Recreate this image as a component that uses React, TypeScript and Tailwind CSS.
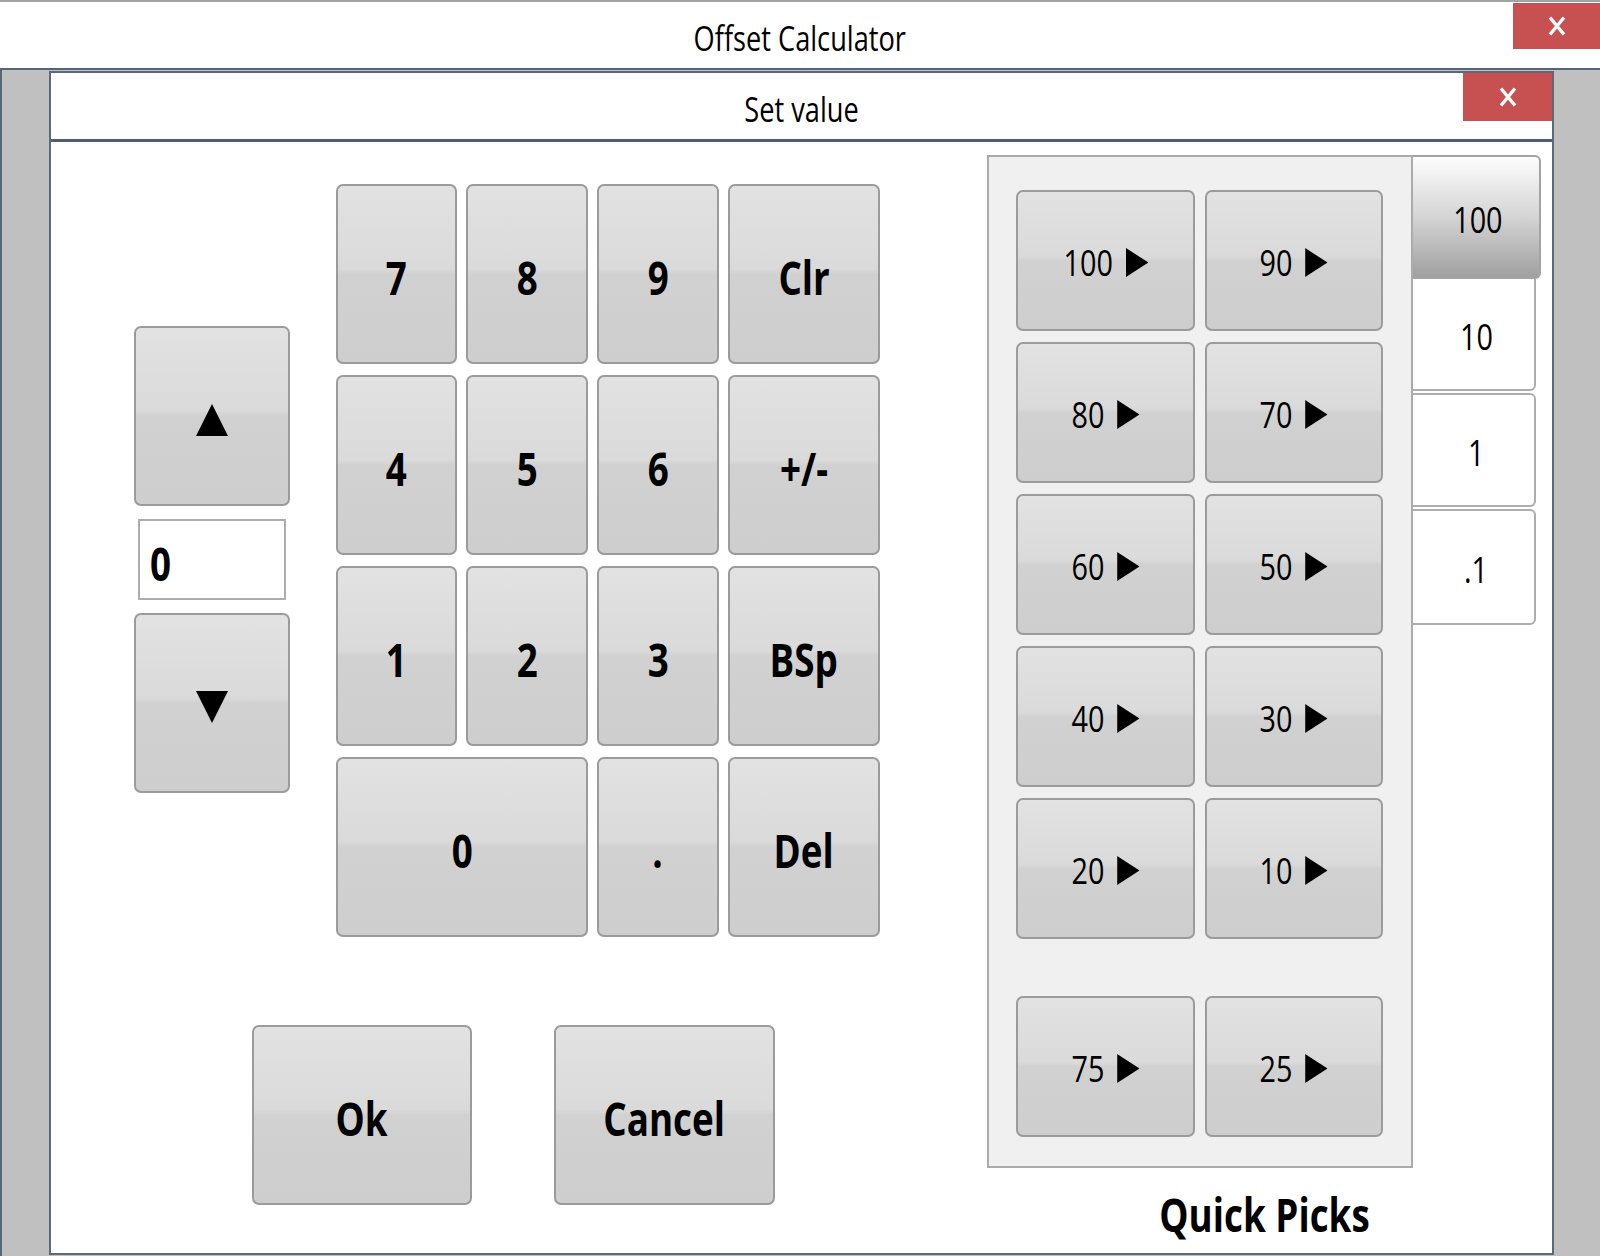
import type { ReactNode } from "react";

const gloss =
	"rounded-[7px] border-2 border-[#9b9b9b] bg-[linear-gradient(to_bottom,#e2e2e2_0%,#dadada_47%,#d1d1d1_50%,#cecece_100%)]";

function Squeeze({ children, className = "" }: { children: ReactNode; className?: string }) {
	return <span className={`inline-flex items-center scale-x-[0.8] ${className}`}>{children}</span>;
}

function GlossButton({ children, className = "" }: { children: ReactNode; className?: string }) {
	return (
		<button type="button" className={`flex items-center justify-center text-black ${gloss} ${className}`}>
			{children}
		</button>
	);
}

function CloseX() {
	return (
		<svg width="18" height="20" viewBox="0 0 18 20">
			<path d="M2 1.5 L16 18.5 M16 1.5 L2 18.5" stroke="white" strokeWidth="3.4" />
		</svg>
	);
}

function Tri({ dir }: { dir: "up" | "down" | "right" }) {
	if (dir === "right")
		return (
			<svg width="28" height="29" viewBox="0 0 28 29">
				<polygon points="0,0 28,14.5 0,29" fill="black" />
			</svg>
		);
	return (
		<svg width="32" height="32" viewBox="0 0 32 32">
			<polygon points={dir === "up" ? "0,32 16,0 32,32" : "0,0 32,0 16,32"} fill="black" />
		</svg>
	);
}

const keys: { label: string; span?: boolean }[] = [
	{ label: "7" },
	{ label: "8" },
	{ label: "9" },
	{ label: "Clr" },
	{ label: "4" },
	{ label: "5" },
	{ label: "6" },
	{ label: "+/-" },
	{ label: "1" },
	{ label: "2" },
	{ label: "3" },
	{ label: "BSp" },
	{ label: "0", span: true },
	{ label: "." },
	{ label: "Del" },
];

const picks = ["100", "90", "80", "70", "60", "50", "40", "30", "20", "10"];

function PickLabel({ value }: { value: string }) {
	return (
		<Squeeze className="gap-[16px] pt-[4px] text-[36px] leading-none">
			<span>{value}</span>
			<Tri dir="right" />
		</Squeeze>
	);
}

export default function App() {
	return (
		<div className="flex h-[1256px] w-[1600px] flex-col overflow-hidden bg-[#c0c0c0] font-['Open_Sans',sans-serif] text-black">
			{/* outer window title */}
			<div className="relative flex h-[70px] shrink-0 items-center justify-center border-t-2 border-b-2 border-t-[#a3a3a3] border-b-[#56667a] bg-white">
				<Squeeze className="pt-[5px] text-[34px] leading-none">Offset Calculator</Squeeze>
				<div className="absolute top-px right-0 flex h-[46px] w-[87px] items-center justify-center bg-[#c75050]">
					<CloseX />
				</div>
			</div>

			<div className="flex-1 border-l-2 border-[#56667a] pt-px pl-[47px]">
				{/* dialog */}
				<div className="flex h-[1184px] w-[1505px] flex-col border-2 border-[#5b6a7b] bg-white">
					<div className="relative flex h-[69px] shrink-0 items-center justify-center border-b-[3px] border-[#4f5f71]">
						<Squeeze className="pt-[6px] text-[34px] leading-none">Set value</Squeeze>
						<div className="absolute top-0 right-0 flex h-[48px] w-[89px] items-center justify-center bg-[#c75050]">
							<CloseX />
						</div>
					</div>

					<div className="flex items-start">
						{/* keypad side */}
						<div className="flex flex-col pt-[42px] pl-[83px]">
							<div className="flex gap-[46px]">
								<div className="mt-[142px] flex w-[156px] flex-col">
									<GlossButton className="h-[180px] w-[156px] pt-[8px]">
										<Tri dir="up" />
									</GlossButton>
									<div className="mx-[4px] mt-[13px] flex h-[81px] items-center border-2 border-[#adadad] pt-[6px] pl-[10px]">
										<Squeeze className="origin-left text-[46px] leading-none font-bold">0</Squeeze>
									</div>
									<GlossButton className="mt-[13px] h-[180px] w-[156px] pt-[7px]">
										<Tri dir="down" />
									</GlossButton>
								</div>

								<div className="grid grid-cols-[121px_122px_122px_152px] grid-rows-[repeat(4,180px)] gap-x-[9px] gap-y-[11px]">
									{keys.map((k) => (
										<GlossButton key={k.label} className={`pt-[5px] ${k.span ? "col-span-2" : ""}`}>
											<Squeeze className="text-[46px] leading-none font-bold">{k.label}</Squeeze>
										</GlossButton>
									))}
								</div>
							</div>

							<div className="mt-[88px] ml-[118px] flex gap-[82px]">
								<GlossButton className="h-[180px] w-[220px] pt-[6px]">
									<Squeeze className="text-[46px] leading-none font-bold">Ok</Squeeze>
								</GlossButton>
								<GlossButton className="h-[180px] w-[221px] pt-[6px]">
									<Squeeze className="text-[46px] leading-none font-bold">Cancel</Squeeze>
								</GlossButton>
							</div>
						</div>

						{/* quick picks */}
						<div className="mt-[13px] ml-[107px] flex w-[554px] flex-col">
							<div className="flex">
								<div className="h-[1013px] w-[426px] border-2 border-[#ababab] bg-[#f0f0f0] pt-[33px] pl-[27px]">
									<div className="grid grid-cols-[179px_178px] grid-rows-[repeat(5,141px)] gap-x-[10px] gap-y-[11px]">
										{picks.map((p) => (
											<GlossButton key={p}>
												<PickLabel value={p} />
											</GlossButton>
										))}
									</div>
									<div className="mt-[57px] grid grid-cols-[179px_178px] gap-x-[10px]">
										{["75", "25"].map((p) => (
											<GlossButton key={p} className="h-[141px]">
												<PickLabel value={p} />
											</GlossButton>
										))}
									</div>
								</div>

								<div className="flex flex-col">
									<div className="flex h-[124px] w-[128px] items-center justify-center rounded-r-[6px] border-2 border-l-0 border-[#a3a3a3] bg-[linear-gradient(to_bottom,#fdfdfd_0%,#d4d4d4_50%,#a0a0a0_100%)] pt-[5px] pl-[4px]">
										<Squeeze className="text-[36px] leading-none">100</Squeeze>
									</div>
									<div className="flex h-[112px] w-[123px] items-center justify-center rounded-br-[6px] border-2 border-t-0 border-l-0 border-[#adadad] bg-white pt-[5px] pl-[6px]">
										<Squeeze className="text-[36px] leading-none">10</Squeeze>
									</div>
									<div className="mt-[2px] flex h-[114px] w-[123px] items-center justify-center rounded-r-[6px] border-2 border-l-0 border-[#adadad] bg-white pt-[5px] pl-[6px]">
										<Squeeze className="text-[36px] leading-none">1</Squeeze>
									</div>
									<div className="mt-[2px] flex h-[116px] w-[123px] items-center justify-center rounded-r-[6px] border-2 border-l-0 border-[#adadad] bg-white pt-[5px] pl-[6px]">
										<Squeeze className="text-[36px] leading-none">.1</Squeeze>
									</div>
								</div>
							</div>

							<div className="mt-[23px] flex justify-center">
								<Squeeze className="text-[46px] leading-none font-bold">Quick Picks</Squeeze>
							</div>
						</div>
					</div>
				</div>
			</div>
		</div>
	);
}
